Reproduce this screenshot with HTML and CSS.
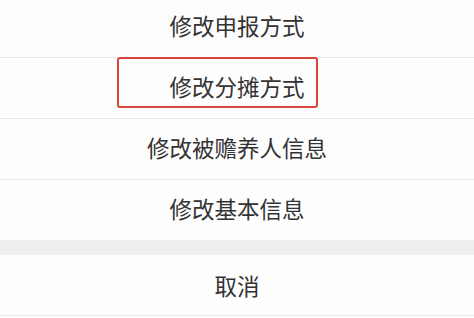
FILE: index.html
```html
<!DOCTYPE html>
<html lang="zh-CN">

<head>
    <meta charset="UTF-8" />
    <meta name="viewport" content="width=device-width, initial-scale=1.0" />
    <title>操作菜单</title>

    <link rel="stylesheet" href="styles.css">
</head>

<body>
    <div class="action-sheet">
        <ul class="action-list">
            <li>修改申报方式</li>
            <li class="marked">修改分摊方式</li>
            <li>修改被赡养人信息</li>
            <li>修改基本信息</li>
        </ul>
        <div class="divider"></div>
        <button class="button-cancel">取消</button>
    </div>
</body>

</html>
```

FILE: styles.css
```css
:root {
    --bg-sheet: #fdfdfd;
    --bg-gap: #eeeef0;
    --line: #e9e9eb;
    --text: #333;
    --mark: #d8453a;
}

body {
    margin: 0;
    font-family: "Noto Sans CJK SC", "Noto Sans", sans-serif;
    background-color: var(--bg-sheet);
    overflow: hidden;
}

.action-sheet {
    margin-top: -3px;
}

.action-list {
    list-style: none;
    margin: 0;
    padding: 0;

    li {
        position: relative;
        height: 60px;
        line-height: 56px;
        border-bottom: 1px solid var(--line);
        text-align: center;
        font-size: 22.5px;
        color: var(--text);
    }

    li:last-child {
        border-bottom: none;
    }
}

/* kotak merah penanda */
.marked::after {
    content: "";
    position: absolute;
    left: 117px;
    top: -1px;
    width: 197px;
    height: 47px;
    border: 2px solid var(--mark);
    border-radius: 3px;
}

.divider {
    height: 15px;
    background-color: var(--bg-gap);
}

.button-cancel {
    display: block;
    width: 100%;
    height: 61px;
    line-height: 56px;
    border: none;
    border-bottom: 1px solid var(--line);
    background: none;
    font-family: inherit;
    font-size: 22.5px;
    color: var(--text);
    padding: 0;
}
```
